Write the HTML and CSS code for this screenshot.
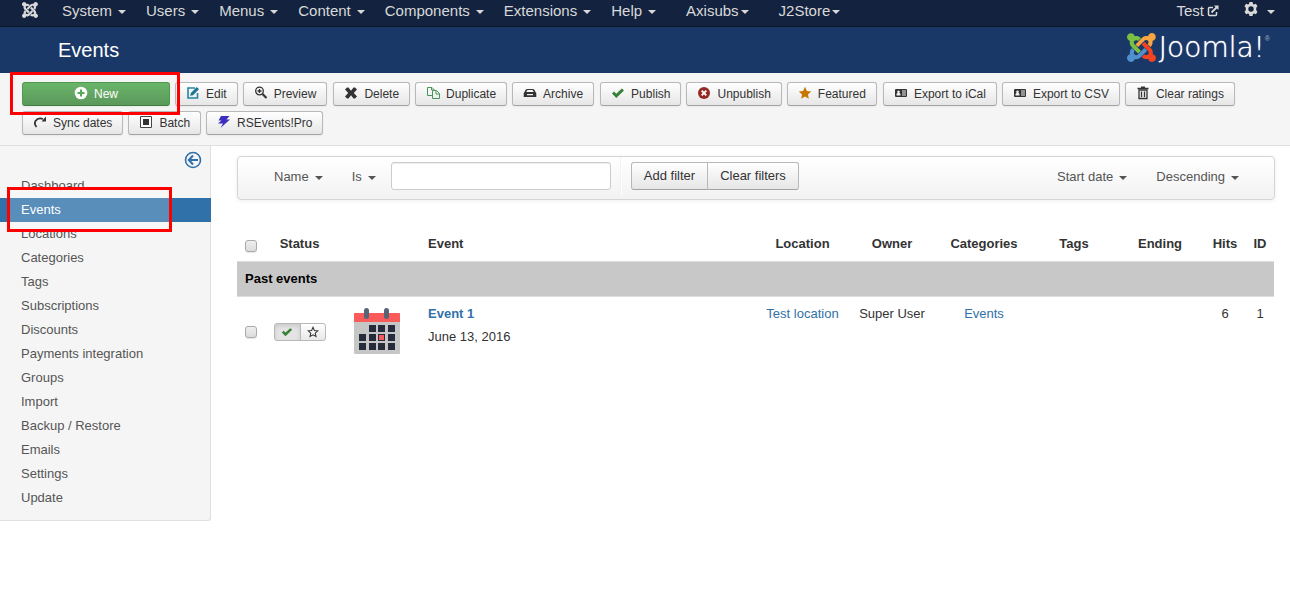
FILE: index.html
```html
<!DOCTYPE html>
<html lang="en">
<head>
<meta charset="utf-8">
<title>Events</title>
<link rel="stylesheet" href="styles.css">
</head>
<body>
<svg class="defs" width="0" height="0" aria-hidden="true">
  <symbol id="card" viewBox="0 0 14 14"><path fill-rule="evenodd" d="M2 3h10q1 0 1 1v6q0 1-1 1H2q-1 0-1-1V4q0-1 1-1zM4.500 4.500a1.300 1.300 0 0 0-.8 2.300L2.500 8v1.500h4V8L5.300 6.800a1.300 1.300 0 0 0-.8-2.300zM8 4.500v1h4v-1zM8 6.500v1h4v-1zM8 8.500v1h4v-1z"/></symbol>
  <symbol id="check" viewBox="0 0 14 14"><path d="M1 7.500 3 5.500 5.300 7.700 10.800 2.500 13 4.500 5.300 12z"/></symbol>
  <symbol id="j-blue" viewBox="0 0 24 24"><path d="M16.719 14.759L14.22 17.26l-2.37 2.37-.462.466c-1.368 1.365-3.297 1.83-5.047 1.397-.327 1.424-1.604 2.49-3.13 2.49C1.438 23.983 0 22.547 0 20.772c0-1.518 1.055-2.789 2.469-3.123-.446-1.76.016-3.705 1.396-5.08l.179-.18 2.37 2.37-.184.181c-.769.779-.769 2.024 0 2.789.771.78 2.022.78 2.787 0l.465-.465 2.367-2.371 2.502-2.506z"/></symbol>
  <symbol id="j-red" viewBox="0 0 24 24"><path d="M17.643 21.411c-1.822.563-3.885.12-5.328-1.318l-.18-.185 2.365-2.369.18.184c.771.768 2.018.768 2.787 0 .765-.765.769-2.010-.004-2.781l-.466-.465-2.365-2.370-2.502-2.503 2.370-2.369 2.499 2.505 2.367 2.370.464.464c1.365 1.360 1.846 3.278 1.411 5.021 1.560.224 2.759 1.560 2.759 3.180 0 1.784-1.439 3.210-3.209 3.210-1.545 0-2.851-1.096-3.135-2.565z"/></symbol>
  <symbol id="j-orange" viewBox="0 0 24 24"><path d="M6.975 9.461l2.508-2.505 2.370-2.370.462-.461c1.377-1.375 3.330-1.845 5.093-1.394.222-1.545 1.563-2.730 3.168-2.730C22.350 0 23.790 1.438 23.790 3.210c0 1.604-1.186 2.934-2.735 3.172.434 1.749-.04 3.684-1.410 5.054l-.18.180-2.369-2.370.183-.18c.769-.766.769-2.016 0-2.785-.766-.766-2.011-.766-2.775 0l-.465.466-2.370 2.370-2.503 2.504z"/></symbol>
  <symbol id="j-green" viewBox="0 0 24 24"><path d="M6.045 2.801c1.816-.549 3.870-.104 5.305 1.327l.181.185-2.370 2.369-.181-.184c-.77-.766-2.014-.766-2.780 0-.77.767-.77 2.014 0 2.784l.464.464 2.370 2.370 2.505 2.505-2.370 2.370-2.504-2.504-2.360-2.370-.465-.465C2.423 10.238 1.968 8.280 2.423 6.530 1.015 6.195 0 4.920 0 3.390 0 1.620 1.440.183 3.210.183c1.545 0 2.835 1.080 3.139 2.534z"/></symbol>
</svg>

<nav class="navbar" aria-label="Main">
  <a class="brand" href="#" aria-label="Control panel"><svg width="16" height="16" viewBox="0 0 24 24"><use href="#j-blue"/><use href="#j-red"/><use href="#j-orange"/><use href="#j-green"/></svg></a>
  <a class="menu" href="#">System<i class="caret"></i></a>
  <a class="menu" href="#">Users<i class="caret"></i></a>
  <a class="menu" href="#">Menus<i class="caret"></i></a>
  <a class="menu" href="#">Content<i class="caret"></i></a>
  <a class="menu" href="#">Components<i class="caret"></i></a>
  <a class="menu" href="#">Extensions<i class="caret"></i></a>
  <a class="menu" href="#">Help<i class="caret"></i></a>
  <a class="menu extra" href="#">Axisubs<i class="caret"></i></a>
  <a class="menu extra" href="#">J2Store<i class="caret"></i></a>
  <a class="site" href="#">Test<svg width="12" height="12" viewBox="0 0 12 12" fill="none" stroke="currentColor"><path stroke-width="1.500" d="M6 2.500H2.500q-1 0-1 1v6q0 1 1 1h6q1 0 1-1V7"/><path stroke-width="1.800" d="M4.500 7.500 9.500 2.500"/><path fill="currentColor" stroke="none" d="M7 .5h4.500V5z"/></svg></a>
  <a class="user" href="#" aria-label="User menu"><svg width="14" height="14" viewBox="0 0 14 14"><path fill="currentColor" fill-rule="evenodd" d="M5.500 0h3l.5 1.900 1 .5 1.900-.7 1.600 2.600-1.300 1.400v2.600l1.300 1.400-1.600 2.600-1.900-.7-1 .5-.5 1.900h-3L5 12.100l-1-.5-1.900.7L.5 9.700l1.300-1.400V5.700L.5 4.300l1.600-2.600 1.900.7 1-.5zM7 4.300a2.700 2.700 0 1 0 0 5.400 2.700 2.700 0 0 0 0-5.400z"/></svg><i class="caret"></i></a>
</nav>

<header class="header">
  <h1>Events</h1>
  <div class="logo">
    <svg width="29" height="29" viewBox="0 0 24 24" aria-hidden="true"><use href="#j-blue" fill="#5091cd"/><use href="#j-red" fill="#f44321"/><use href="#j-orange" fill="#f9a541"/><use href="#j-green" fill="#7ac143"/></svg>
    <span class="wordmark">Joomla!</span><sup>®</sup>
  </div>
</header>

<div class="toolbar" role="toolbar">
  <div class="marked"><button class="btn new"><svg viewBox="0 0 14 14"><circle cx="7" cy="7" r="6.300" fill="#fff"/><path d="M7 3.500v7M3.500 7h7" stroke="#57a957" stroke-width="2"/></svg>New</button><span class="mark"></span></div>
  <button class="btn"><svg viewBox="0 0 14 14"><path d="M9 2H2v10h9.500V7" fill="none" stroke="#2384a5" stroke-width="1.600"/><path d="m4.200 9.800.6-2.800 6-6 2.200 2.200-6 6z" fill="#1f7594"/></svg>Edit</button>
  <button class="btn"><svg viewBox="0 0 14 14" fill="none" stroke="#333"><circle cx="5.500" cy="5" r="3.800" stroke-width="1.300"/><path stroke-width="1.300" d="M5.500 3v4M3.500 5h4"/><path stroke-width="2.200" d="m8.500 8 4 4"/></svg>Preview</button>
  <button class="btn"><svg viewBox="0 0 14 14"><path fill="#333" d="M1 3.500 3 1.500h1.500L7 4.700l2.500-3.200H11l2 2L9.800 7l3.200 3.500-2 2H9.500L7 9.300l-2.500 3.200H3l-2-2L4.200 7z"/></svg>Delete</button>
  <button class="btn"><svg viewBox="0 0 14 14" fill="none" stroke="#4a9658"><path d="M6 9.500H1.500v-8H6L8 3.500V4M5.500 1.500V4h2.500"/><path d="M6.500 4.500h4l3 3v5h-7zM10 4.500v3.500h3.500"/></svg>Duplicate</button>
  <button class="btn"><svg viewBox="0 0 14 14"><path fill="#333" fill-rule="evenodd" d="M4 3h6q1.500 0 2.500 3 .8.500.8 1.500V11H.7V7.500q0-1 .8-1.500Q2.500 3 4 3zm.5 1L3.200 6h7.600L9.500 4zM4 8v1.200h6V8z"/></svg>Archive</button>
  <button class="btn"><svg viewBox="0 0 14 14" fill="#378137"><use href="#check"/></svg>Publish</button>
  <button class="btn"><svg viewBox="0 0 14 14"><circle cx="7" cy="7" r="6" fill="#942a25"/><path d="m4.700 4.700 4.600 4.600m0-4.600L4.700 9.300" stroke="#fff" stroke-width="1.900"/></svg>Unpublish</button>
  <button class="btn"><svg viewBox="0 0 14 14"><path fill="#c67605" d="m7 .8 1.900 4.100 4.300.5-3.200 3 .8 4.400L7 10.600l-3.800 2.200.8-4.400-3.200-3 4.300-.5z"/></svg>Featured</button>
  <button class="btn"><svg fill="#333"><use href="#card"/></svg>Export to iCal</button>
  <button class="btn"><svg fill="#333"><use href="#card"/></svg>Export to CSV</button>
  <button class="btn"><svg viewBox="0 0 14 14"><path d="M1.500 2.500h11M5 1.200h4" stroke="#333" stroke-width="1.600"/><path d="M3 4h8v8.500H3zM5.500 5.500V11M8.500 5.500V11" fill="none" stroke="#333" stroke-width="1.300"/></svg>Clear ratings</button>
  <button class="btn"><svg viewBox="0 0 14 14"><path d="M3.500 12Q.8 9 2.500 6q2.700-4 7.500-2" fill="none" stroke="#333" stroke-width="1.800"/><path d="M8.500 6.500 13 1.500v5z" fill="#333"/></svg>Sync dates</button>
  <button class="btn"><svg viewBox="0 0 14 14"><path d="M1.500 1.500h11v11h-11z" fill="#fff" stroke="#444"/><path d="M4 4h6v6H4z" fill="#333"/></svg>Batch</button>
  <button class="btn"><svg viewBox="0 0 14 14"><path fill="#3c2fc0" d="M4 1h8.500L9.500 4.500H13L3.500 13 6 8.500H1L4.500 5.500H1.500z"/></svg>RSEvents!Pro</button>
</div>

<div class="page">
  <aside class="sidebar">
    <button class="toggle" aria-label="Hide sidebar"><svg width="18" height="18" viewBox="0 0 18 18" fill="none" stroke="#3071a9"><circle cx="9" cy="9" r="7.500" stroke-width="1.600"/><path stroke-width="2" d="M14 9H5M9 4.500 4.800 9 9 13.500"/></svg></button>
    <ul>
      <li><a href="#">Dashboard</a></li>
      <li class="active"><a href="#">Events</a><span class="mark"></span></li>
      <li><a href="#">Locations</a></li>
      <li><a href="#">Categories</a></li>
      <li><a href="#">Tags</a></li>
      <li><a href="#">Subscriptions</a></li>
      <li><a href="#">Discounts</a></li>
      <li><a href="#">Payments integration</a></li>
      <li><a href="#">Groups</a></li>
      <li><a href="#">Import</a></li>
      <li><a href="#">Backup / Restore</a></li>
      <li><a href="#">Emails</a></li>
      <li><a href="#">Settings</a></li>
      <li><a href="#">Update</a></li>
    </ul>
  </aside>

  <main class="content">
    <form class="filters">
      <button type="button" class="drop">Name<i class="caret"></i></button>
      <button type="button" class="drop">Is<i class="caret"></i></button>
      <input class="search" type="text" aria-label="Filter value">
      <span class="divider"></span>
      <div class="group"><button type="button">Add filter</button><button type="button">Clear filters</button></div>
      <div class="sorting">
        <button type="button" class="drop">Start date<i class="caret"></i></button>
        <button type="button" class="drop">Descending<i class="caret"></i></button>
      </div>
    </form>

    <table class="events">
      <colgroup><col class="c-check"><col class="c-status"><col class="c-thumb"><col><col class="c-location"><col class="c-owner"><col class="c-categories"><col class="c-tags"><col class="c-ending"><col class="c-hits"><col class="c-id"></colgroup>
      <thead>
        <tr><th class="check"><input type="checkbox" aria-label="Select all"></th><th>Status</th><th></th><th class="name">Event</th><th>Location</th><th>Owner</th><th>Categories</th><th>Tags</th><th>Ending</th><th>Hits</th><th>ID</th></tr>
      </thead>
      <tbody>
        <tr class="section"><td colspan="11">Past events</td></tr>
        <tr>
          <td class="check mid"><input type="checkbox" aria-label="Select Event 1"></td>
          <td class="mid"><div class="state"><button class="on" aria-label="Published"><svg width="12" height="12" viewBox="0 0 14 14" fill="#378137"><use href="#check"/></svg></button><button aria-label="Feature"><svg width="12" height="12" viewBox="0 0 14 14"><path fill="none" stroke="#333" stroke-width="1.200" d="m7 1.500 1.600 3.700 4 .4-3 2.700.9 4L7 10.200l-3.500 2.100.9-4-3-2.700 4-.4z"/></svg></button></div></td>
          <td class="mid"><svg class="thumb" width="48" height="46" viewBox="0 0 48 46" role="img" aria-label="Calendar"><rect x="1" y="5" width="46" height="41" rx="1" fill="#c6c6c6"/><path d="M1 14V6q0-1 1-1h44q1 0 1 1v8z" fill="#fb5a5a"/><rect x="11" y="0" width="5" height="11" rx="2.500" fill="#596378"/><rect x="31" y="0" width="5" height="11" rx="2.500" fill="#596378"/><path fill="#272c3d" d="M16 17h7v7h-7zM25 17h7v7h-7zM35 17h7v7h-7zM6 26h7v7H6zM16 26h7v7h-7zM25 26h7v7h-7zM35 26h7v7h-7zM6 35h7v7H6zM16 35h7v7h-7zM25 35h7v7h-7zM35 35h7v7h-7z"/><path fill="#fb5a5a" d="M26 27h5v5h-5z"/></svg></td>
          <td class="name"><a href="#"><b>Event 1</b></a><p>June 13, 2016</p></td>
          <td><a href="#">Test location</a></td><td>Super User</td><td><a href="#">Events</a></td><td></td><td></td><td>6</td><td>1</td>
        </tr>
      </tbody>
    </table>
  </main>
</div>
</body>
</html>
```
FILE: styles.css
```css
* { box-sizing: border-box; }
body { margin: 0; background: #fff; color: #333; font: 13px/18px "Liberation Sans", Arial, sans-serif; }
a { color: #3071a9; text-decoration: none; }
button { font: inherit; color: inherit; cursor: pointer; margin: 0; }
.defs { position: absolute; }
.caret { display: inline-block; border: 4px solid transparent; border-top-color: currentColor; border-bottom: 0; margin-left: 6px; vertical-align: middle; }

.navbar { display: flex; height: 27px; padding: 0 15px 0 22px; background: #13233f; border-bottom: 1px solid #0b1629; font-size: 15px; line-height: 22px; }
.navbar a { color: #d9d9d9; }
.brand { padding-top: 2px; margin-right: 14px; }
.brand svg { display: block; fill: #d9d9d9; }
.menu { padding: 0 10px; }
.extra { padding: 0 10px 0 20px; }
.extra .caret { margin-left: 2px; }
.site { margin-left: auto; }
.site svg { margin-left: 3px; vertical-align: -1px; }
.user { margin-left: 25px; }
.user svg { vertical-align: 0; }
.user .caret { margin-left: 9px; }

.header { display: flex; align-items: flex-start; justify-content: space-between; height: 46px; padding: 0 20px 0 58px; background: #1a3867; color: #fff; }
.header h1 { margin: 0; font-size: 20px; font-weight: normal; line-height: 46px; }
.logo { display: flex; align-items: center; height: 40px; }
.wordmark { margin-left: 3px; font: 200 28px/29px "DejaVu Sans", sans-serif; text-shadow: 0 0 1px #fff; }
.logo sup { align-self: flex-start; font-size: 7px; line-height: 24px; color: #a3afc2; }

.toolbar { display: flex; flex-wrap: wrap; gap: 5px; padding: 9px 22px 10px; background: #f5f5f5; border-bottom: 1px solid #dfdfdf; font-size: 12px; }
.btn { display: flex; align-items: center; justify-content: center; gap: 6px; height: 24px; padding: 0 10px; line-height: 22px; border: 1px solid #b8b8b8; border-bottom-color: #a2a2a2; border-radius: 3px; background: linear-gradient(#fff, #e6e6e6); box-shadow: 0 1px 2px rgba(0,0,0,.05); }
.btn svg { width: 14px; height: 14px; margin-bottom: 2px; }
.toolbar .btn:nth-child(3n) { margin-right: 1px; }
.btn.new { width: 148px; color: #fff; border-color: #4d9a4d #4d9a4d #3e7f3e; background: linear-gradient(#6ab56a, #5b985b); }
.marked { position: relative; }
.mark { position: absolute; border: 3px solid #f00; z-index: 2; pointer-events: none; }
.marked .mark { inset: -10px -10px -9px -12px; }

.page { display: flex; align-items: flex-start; }
.sidebar { flex: none; width: 211px; padding-bottom: 10px; background: #f5f5f5; border: solid #dfdfdf; border-width: 0 1px 1px 0; border-radius: 0 0 3px; }
.toggle { display: block; margin: 5px 8px 5px auto; padding: 0; border: 0; background: none; height: 18px; }
.toggle svg { display: block; }
.sidebar ul { list-style: none; margin: 0; padding: 0; }
.sidebar li { position: relative; }
.sidebar li a { display: block; padding: 3px 21px; color: #555; }
.sidebar .active { margin-right: -1px; background: #3071a9; }
.sidebar .active a { color: #fff; }
.active .mark { inset: -11px auto -10px 7px; width: 165px; background: rgba(255,255,255,.2); }

.content { flex: 1; padding: 10px 15px 0 26px; }
.filters { display: flex; align-items: center; height: 44px; padding: 0 35px 4px 36px; border: 1px solid #d4d4d4; border-radius: 4px; background: linear-gradient(#fff, #f2f2f2); box-shadow: 0 1px 4px rgba(0,0,0,.07); }
.drop { padding: 2px 0 0; border: 0; background: none; color: #555; margin-right: 29px; }
.drop + .search { margin-left: -14px; }
.search { width: 220px; height: 28px; border: 1px solid #ccc; border-radius: 3px; background: #fff; box-shadow: inset 0 1px 1px rgba(0,0,0,.07); }
.divider { align-self: stretch; width: 2px; margin: 0 9px; border-left: 1px solid #f2f2f2; border-right: 1px solid #fff; }
.group { display: flex; }
.group button { height: 28px; padding: 0 12px; border: 1px solid #b8b8b8; border-bottom-color: #a2a2a2; background: linear-gradient(#fff, #e6e6e6); }
.group button:first-child { border-radius: 3px 0 0 3px; }
.group button:last-child { border-radius: 0 3px 3px 0; margin-left: -1px; }
.sorting { margin-left: auto; display: flex; }
.sorting .drop:last-child { margin-right: 0; }

.events { width: calc(100% - 1px); margin-top: 27px; table-layout: fixed; border-collapse: collapse; text-align: center; }
.c-check { width: 28px; } .c-status { width: 69px; } .c-thumb { width: 86px; }
.c-location { width: 91px; } .c-owner { width: 88px; } .c-categories { width: 96px; }
.c-tags { width: 84px; } .c-ending { width: 88px; } .c-hits { width: 42px; } .c-id { width: 28px; }
.events th, .events td { padding: 8px 0; vertical-align: top; }
.events th { border-bottom: 1px solid #ddd; }
.events .name { text-align: left; padding-left: 8px; }
.events .check { text-align: left; padding-left: 8px; }
.events .mid { vertical-align: middle; }
.name p { margin: 5px 0 0; }
.section td { background: #c8c8c8; color: #000; font-weight: bold; text-align: left; border-bottom: 1px solid #ddd; }
.events .section td { padding-left: 8px; }
.events input { appearance: none; width: 12px; height: 12px; margin: 0; vertical-align: -4px; border: 1px solid #aaa; border-radius: 3px; background: linear-gradient(#eee, #dcdcdc); box-shadow: 0 1px 1px rgba(0,0,0,.1); }
.events .mid input { display: block; }
.state { display: flex; width: 52px; margin: 0 auto; }
.state button { display: flex; align-items: center; justify-content: center; width: 26px; height: 18px; padding: 0; border: 1px solid #b8b8b8; background: linear-gradient(#fff, #e8e8e8); }
.state button:first-child { width: 27px; border-radius: 3px 0 0 3px; }
.state button:last-child { border-radius: 0 3px 3px 0; margin-left: -1px; }
.state .on { background: #e4e4e4; box-shadow: inset 0 2px 4px rgba(0,0,0,.12); }
.thumb { display: block; margin: 3px auto 5px; }
```
